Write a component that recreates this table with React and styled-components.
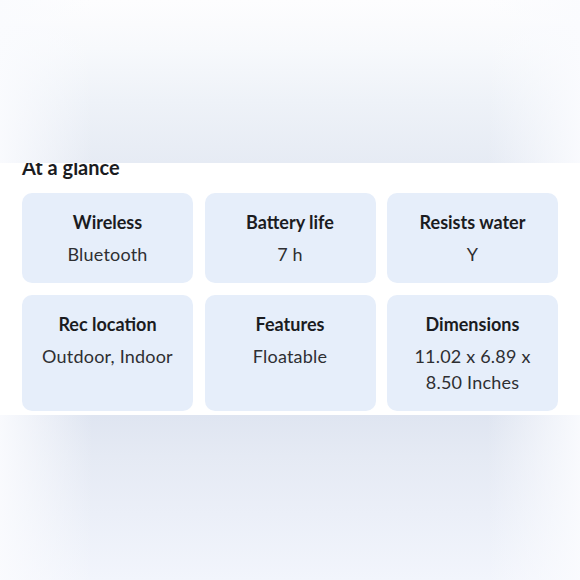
import React from "react";
import styled, {createGlobalStyle} from "styled-components";

const GlobalStyle = createGlobalStyle`
  html, body {
    margin: 0;
    padding: 0;
    background: #ffffff;
  }
  body {
    font-family: Lato, "Open Sans", Arial, sans-serif;
    color: #2e2f32;
  }
`;

const Page = styled.div`
  width: 580px;
  height: 580px;
  display: flex;
  flex-direction: column;
  overflow: hidden;
`;

// blurred page content behind the sheet
const Backdrop = styled.div`
  flex: 0 0 ${props => props.height}px;
  background:
    linear-gradient(90deg, rgba(250, 251, 254, 0.95) 0%, rgba(250, 251, 254, 0) 16%, rgba(250, 251, 254, 0) 84%, rgba(250, 251, 254, 0.95) 100%),
    ${props => props.top
        ? "linear-gradient(180deg, #fdfdfe 0%, #f7f9fc 30%, #eef2f8 62%, #e6ebf4 100%)"
        : "linear-gradient(180deg, #dfe5f1 0%, #e5eaf4 25%, #ebeff8 60%, #f2f5fc 100%)"};
`;

const Section = styled.section`
  flex: 0 0 252px;
  overflow: hidden;
  background: #ffffff;
  padding: 0 22px;
  box-sizing: border-box;
`;

const Heading = styled.h2`
  margin: -8px 0 14px 0;
  font-size: 20px;
  line-height: 24px;
  font-weight: 700;
  color: #1b1c1f;
`;

const Grid = styled.div`
  display: grid;
  grid-template-columns: repeat(3, 1fr);
  column-gap: 11.5px;
  row-gap: 12px;
`;

const Card = styled.div`
  background: #e6eefa;
  border-radius: 10px;
  padding: 17px 16px 16px;
  text-align: center;
`;

const Label = styled.div`
  font-size: 18px;
  line-height: 24px;
  font-weight: 700;
  color: #1b1c1f;
`;

const Value = styled.div`
  margin-top: 7px;
  font-size: 18px;
  line-height: 26px;
  font-weight: 400;
  letter-spacing: 0.2px;
  color: #2e2f32;
`;

const specs = [
    {label: "Wireless", value: "Bluetooth"},
    {label: "Battery life", value: "7 h"},
    {label: "Resists water", value: "Y"},
    {label: "Rec location", value: "Outdoor, Indoor"},
    {label: "Features", value: "Floatable"},
    {label: "Dimensions", value: "11.02 x 6.89 x 8.50 Inches"}
];

export default function App() {
    return (
        <>
            <GlobalStyle/>
            <Page>
                <Backdrop top height={163}/>
                <Section>
                    <Heading>At a glance</Heading>
                    <Grid>
                        {specs.map(({label, value}) => (
                            <Card key={label}>
                                <Label>{label}</Label>
                                <Value>{value}</Value>
                            </Card>
                        ))}
                    </Grid>
                </Section>
                <Backdrop height={165}/>
            </Page>
        </>
    );
}
